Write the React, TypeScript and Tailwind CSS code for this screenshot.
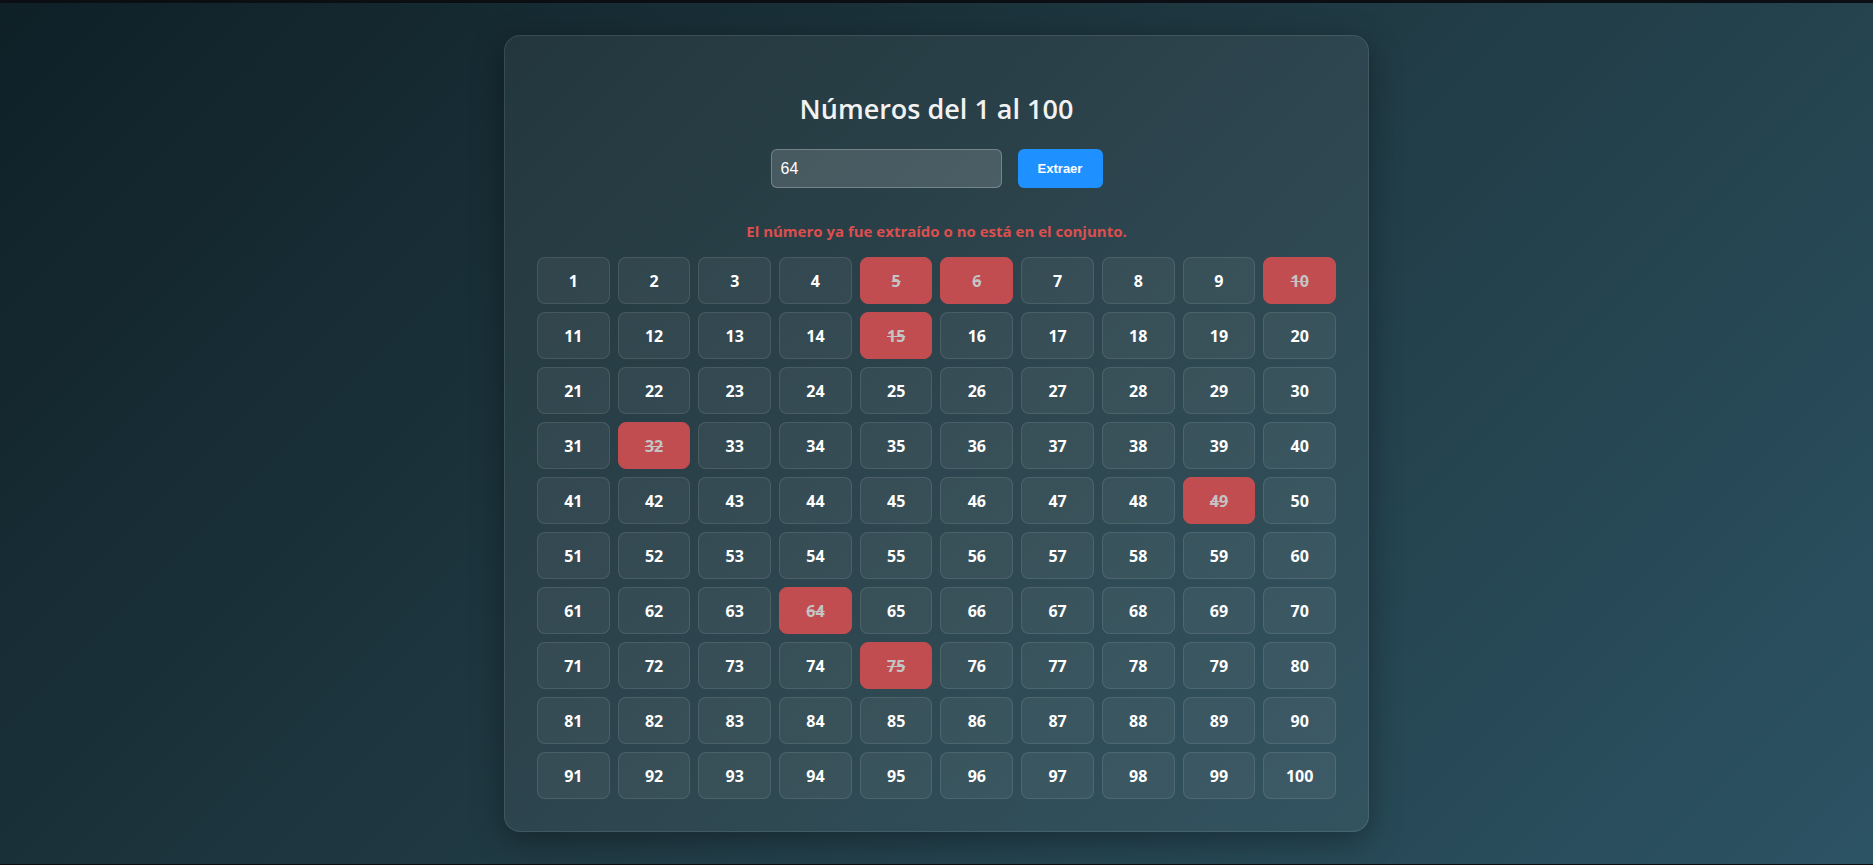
import { useState } from "react";

const drawn = [5, 6, 10, 15, 32, 49, 64, 75];

export default function App() {
  const [value, setValue] = useState("64");
  const numbers = Array.from({ length: 100 }, (_, i) => i + 1);

  return (
    <div className="flex min-h-[865px] flex-col bg-[linear-gradient(135deg,#0f2027,#203a43,#2c5364)] font-['Open_Sans',sans-serif]">
      <div className="h-[3px] bg-[#0b0e12]" />
      <div className="flex flex-1 justify-center pt-8">
        <div className="h-fit w-[865px] rounded-[16px] border border-white/10 bg-white/[0.06] p-8 shadow-[0_8px_32px_rgba(0,0,0,0.35)]">
          {/* Título */}
          <h1 className="mt-[25px] text-center text-[27px] leading-[1.2] font-semibold text-[#f2f2f2]">
            Números del 1 al 100
          </h1>

          {/* Entrada */}
          <div className="mt-[24px] flex items-center justify-center gap-4">
            <input
              type="text"
              value={value}
              onChange={(e) => setValue(e.target.value)}
              className="h-[39px] w-[231px] rounded-md border border-white/25 bg-white/15 px-[9px] font-['Liberation_Sans',Arial,sans-serif] text-[16px] text-white outline-none"
            />
            <button className="h-[39px] w-[85px] rounded-md bg-[#1e90ff] font-['Liberation_Sans',Arial,sans-serif] text-[13px] font-bold text-white">
              Extraer
            </button>
          </div>

          {/* Mensaje */}
          <p className="mt-[33px] mb-4 text-center text-[15px] leading-5 font-bold text-[#dc4f4f]">
            El número ya fue extraído o no está en el conjunto.
          </p>

          {/* Grilla */}
          <div className="grid grid-cols-10 gap-2">
            {numbers.map((n) => {
              const isDrawn = drawn.includes(n);
              return (
                <div
                  key={n}
                  className={`flex h-[47px] items-center justify-center rounded-lg border text-[16px] font-bold ${
                    isDrawn
                      ? "border-[#c24d50] bg-[#c24d50] text-[#c4c4c4] line-through"
                      : "border-white/10 bg-white/[0.05] text-white"
                  }`}
                >
                  {n}
                </div>
              );
            })}
          </div>
        </div>
      </div>
      <div className="h-px bg-[#0b0e12]" />
    </div>
  );
}
